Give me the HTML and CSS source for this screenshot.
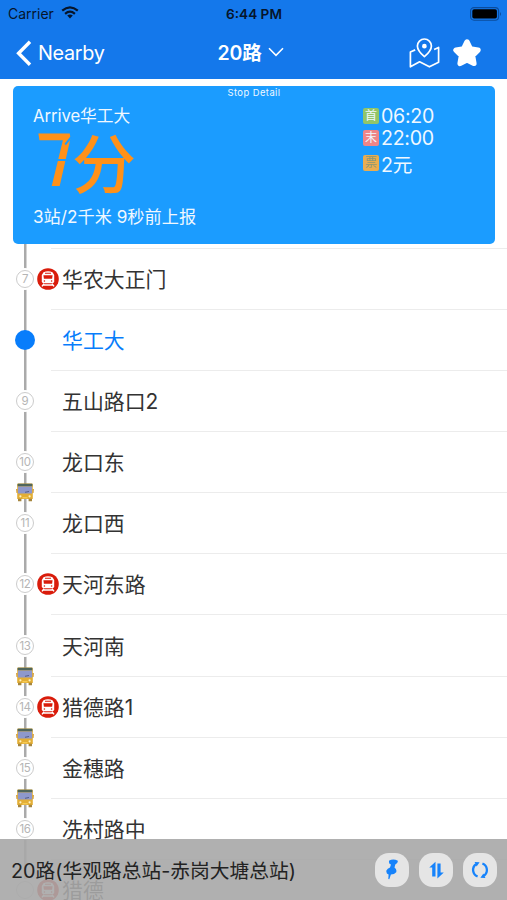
FILE: index.html
```html
<!DOCTYPE html>
<html lang="zh-CN">
<head>
<meta charset="utf-8">
<title>20路</title>
<link rel="stylesheet" href="styles.css">
</head>
<body>
<svg width="0" height="0" class="defs">
  <symbol id="metro" viewBox="0 0 22 22">
    <circle cx="11" cy="11" r="10.8" fill="#d91c0b"/>
    <path d="M6.5 4.2Q11 2.2 15.5 4.2L17.2 7V13.2Q17.2 15.2 15.2 15.2H6.8Q4.8 15.2 4.8 13.2V7Z" fill="#fff"/>
    <path d="M6.4 7.2h9.2l-.5 3.6H6.9zM8 4.8h6v1H8z" fill="#d91c0b"/>
    <circle cx="7.4" cy="13" r=".8" fill="#d91c0b"/><circle cx="14.6" cy="13" r=".8" fill="#d91c0b"/>
    <path d="M7 15.8L5 18.4M15 15.8l2 2.6M6.2 17h9.6" stroke="#fff" stroke-width="1.4"/>
  </symbol>
  <symbol id="bus" viewBox="0 0 18 19">
    <path d="M1.2 1.4Q1.4.6 2.4.6h13.2Q16.6.6 16.8 1.4V16H1.2z" fill="#e3ae35"/>
    <path d="M1.6.7h14.8v2.7H1.6z" fill="#50665b"/>
    <path d="M2 3.5h14v7H2z" fill="#8e98cc"/>
    <path d="M9 9.3l4-.8" stroke="#4e5580" stroke-width=".9"/>
    <path d="M0 6h1.8v4H.4zM16.2 6H18l-.4 4h-1.4z" fill="#d5a443"/>
    <path d="M2 15.8h3.4v2.4H2zM12.6 15.8H16v2.4h-3.4z" fill="#a6863f"/>
    <circle cx="4.4" cy="13.3" r="1.1" fill="#fff3c4"/><circle cx="13.6" cy="13.3" r="1.1" fill="#fff3c4"/>
    <path d="M6.5 14h5v1.4h-5z" fill="#f5ca55"/>
  </symbol>
</svg>
<div class="app">
  <header class="header">
    <div class="status">
      <div class="carrier"><span>Carrier</span>
        <svg width="18" height="13" viewBox="0 0 18 13"><g fill="none" stroke="#06152b" stroke-width="2.2"><path d="M1.2 4.6Q9-2 16.8 4.6"/><path d="M4.1 7.8Q9 3.5 13.9 7.8"/></g><path d="M6.2 9.6Q9 7.5 11.8 9.6L9 12.5z" fill="#06152b"/></svg>
      </div>
      <div class="clock">6:44 PM</div>
      <svg class="battery" width="32" height="14" viewBox="0 0 32 14"><rect x=".6" y=".6" width="28" height="12.6" rx="3.4" fill="none" stroke="#0b4c9c" stroke-width="1.1"/><rect x="2.3" y="2.3" width="24.6" height="9.2" rx="1.8" fill="#000"/><path d="M30 5q2 2 0 4z" fill="#0b4c9c"/></svg>
    </div>
    <nav class="nav">
      <div class="back"><svg width="16" height="27" viewBox="0 0 16 27"><path d="M14 1.8L2.6 13.3 14 24.8" fill="none" stroke="#fff" stroke-width="3.4"/></svg><span>Nearby</span></div>
      <div class="title"><span>20路</span><svg width="16" height="10" viewBox="0 0 16 10"><path d="M1 1.3l7 7 7-7" fill="none" stroke="#fff" stroke-width="1.6"/></svg></div>
      <div class="actions">
        <svg width="31" height="31" viewBox="0 0 31 31" fill="none" stroke="#fff" stroke-width="1.7" stroke-linejoin="round"><path d="M6.2 11.9L1.4 14v14.8l9.2-5 9.8 5 9.2-4.6V9.4l-4.5 2.2"/><path d="M15.4 18.6Q8.4 12.7 8.4 7.9a7 6.9 0 0 1 14 0q0 4.8-7 10.7z"/><circle cx="15.4" cy="8.2" r="1.5" fill="#fff"/></svg>
        <svg width="30" height="31" viewBox="0 0 30 31"><path d="M15 4l3.4 7 7.6 1.1-5.5 5.5 1.4 7.8L15 21.8l-6.9 3.6 1.4-7.8L4 12.1 11.6 11z" fill="#fff" stroke="#fff" stroke-width="5.4" stroke-linejoin="round"/></svg>
      </div>
    </nav>
  </header>

  <section class="card">
    <div class="card-caption">Stop Detail</div>
    <div class="card-body">
      <div class="arrival">
        <div class="arrive">Arrive华工大</div>
        <div class="eta"><span class="digit">7</span><span class="unit">分</span></div>
        <div class="distance">3站/2千米 9秒前上报</div>
      </div>
      <div class="facts">
        <div class="fact"><span class="tag first">首</span><span>06:20</span></div>
        <div class="fact"><span class="tag last">末</span><span>22:00</span></div>
        <div class="fact fare"><span class="tag price">票</span><span>2元</span></div>
      </div>
    </div>
  </section>

  <main class="stops">
    <div class="stop"><div class="track"><span class="dot">7</span></div><div class="mark"><svg class="metro"><use href="#metro"/></svg></div><div class="name">华农大正门</div></div>
    <div class="stop current"><div class="track"><span class="dot"></span></div><div class="mark"></div><div class="name">华工大</div></div>
    <div class="stop"><div class="track"><span class="dot">9</span></div><div class="mark"></div><div class="name">五山路口2</div></div>
    <div class="stop"><div class="track"><span class="dot">10</span><svg class="bus"><use href="#bus"/></svg></div><div class="mark"></div><div class="name">龙口东</div></div>
    <div class="stop"><div class="track"><span class="dot">11</span></div><div class="mark"></div><div class="name">龙口西</div></div>
    <div class="stop"><div class="track"><span class="dot">12</span></div><div class="mark"><svg class="metro"><use href="#metro"/></svg></div><div class="name">天河东路</div></div>
    <div class="stop"><div class="track"><span class="dot">13</span><svg class="bus"><use href="#bus"/></svg></div><div class="mark"></div><div class="name">天河南</div></div>
    <div class="stop"><div class="track"><span class="dot">14</span><svg class="bus"><use href="#bus"/></svg></div><div class="mark"><svg class="metro"><use href="#metro"/></svg></div><div class="name">猎德路1</div></div>
    <div class="stop"><div class="track"><span class="dot">15</span><svg class="bus"><use href="#bus"/></svg></div><div class="mark"></div><div class="name">金穗路</div></div>
    <div class="stop"><div class="track"><span class="dot">16</span></div><div class="mark"></div><div class="name">冼村路中</div></div>
    <div class="stop"><div class="track"><span class="dot"></span></div><div class="mark"><svg class="metro"><use href="#metro"/></svg></div><div class="name">猎德</div></div>
  </main>

  <footer class="footer">
    <div class="route">20路(华观路总站-赤岗大塘总站)</div>
    <div class="tools">
      <button class="tool" aria-label="Pin"><svg width="14" height="21" viewBox="0 0 14 21" fill="#1683fb"><path d="M4.2 1.4Q8.5-.6 12.8 1.7q.4 2.5-2.5 3.9l-.8 3q2.6 1.6 1.7 4.7-1.8 2.3-5.3 2.3l-1.6 4.6-1-.2.3-4.5Q.9 14.6 1.4 11.6q1-2 3.6-3l1-3Q3.2 4.6 4.2 1.4z"/></svg></button>
      <button class="tool" aria-label="Reverse"><svg width="15" height="18" viewBox="0 0 15 18" fill="#1683fb"><path d="M3.2 15.4V6.4H.3L6.5.8v14.6zM8.4 2.5h3.2v9.1h3.2L8.4 17.4z"/></svg></button>
      <button class="tool" aria-label="Refresh"><svg width="18" height="18" viewBox="0 0 18 18"><path d="M6.6 15.5A7 7 0 0 1 5 3.3M11.4 2.5A7 7 0 0 1 13 14.7" fill="none" stroke="#1683fb" stroke-width="2.3"/><path d="M3.6.9l5 .4-3 4.2zM14.4 17.1l-5-.4 3-4.2z" fill="#1683fb"/></svg></button>
    </div>
  </footer>
</div>
</body>
</html>
```

FILE: styles.css
```css
* { box-sizing: border-box; }
body { margin: 0; font-family: Inter, "Noto Sans CJK SC", sans-serif; }
.defs { position: absolute; }
.app { position: relative; width: 507px; height: 900px; overflow: hidden; background: #fff; display: flex; flex-direction: column; }

.header { flex: none; height: 79px; background: #1478eb; color: #fff; }
.status { height: 27px; padding: 0 7px 0 8px; display: grid; grid-template-columns: 1fr auto 1fr; align-items: center; color: #06152b; }
.carrier { display: flex; align-items: center; gap: 7px; font-size: 14px; line-height: 27px; }
.carrier svg { margin-top: -2px; }
.clock { font-size: 13.6px; font-weight: 600; }
.battery { justify-self: end; margin-right: -2px; }
.nav { height: 52px; padding: 0 25px 0 16px; display: grid; grid-template-columns: 1fr auto 1fr; align-items: center; }
.back { display: flex; align-items: center; gap: 6px; font-size: 19.8px; letter-spacing: -.3px; }
.title { display: flex; align-items: center; gap: 7px; margin: -3px -2px 0 2px; font-size: 19.5px; font-weight: 600; letter-spacing: -.2px; }
.actions { display: flex; justify-content: flex-end; gap: 12px; }

.card { flex: none; position: relative; z-index: 1; width: 482px; height: 158px; margin: 6.5px 0 0 13px; border-radius: 5px; background: #1b9cff; color: #f0f8ff; }
.card-caption { height: 16px; line-height: 14px; text-align: center; font-size: 9.4px; letter-spacing: .45px; }
.card-body { display: flex; padding: 0 0 0 20px; }
.arrival { width: 330px; }
.arrive { height: 28px; line-height: 28px; font-size: 16.7px; letter-spacing: -.05px; }
.eta { display: flex; height: 74px; color: #ff9119; }
.digit { position: relative; width: 39px; font: 500 74px/57px Roboto, sans-serif; transform: translate(6px, 2px) scaleX(.86) skewX(10deg); }
.digit::before, .digit::after { content: ""; position: absolute; height: 1.5px; background: #1b9cff; }
.digit::before { width: 11px; left: 30px; top: 8px; transform: rotate(-42deg); }
.digit::after { width: 14px; left: 18px; top: 27px; }
.unit { font: 500 64px/60px "Noto Sans CJK SC", sans-serif; }
.distance { height: 26px; line-height: 26px; font-size: 17.2px; }
.facts { padding-top: 3px; }
.fact { display: flex; align-items: center; gap: 2px; height: 22.4px; font-size: 19.6px; letter-spacing: -.3px; }
.fare { margin-top: 3px; }
.tag { width: 16px; height: 16px; border-radius: 2px; font-size: 12px; line-height: 16px; text-align: center; letter-spacing: 0; }
.first { background: #91c568; }
.last { background: #ee8588; }
.price { background: #e9ad50; color: #8d9877; }

.stops { flex: none; padding-top: 5.4px; margin-top: -1px; }
.stop { display: grid; grid-template-columns: 37px 25px 1fr; height: 61.1px; align-items: center; color: #333; background: linear-gradient(#ececec, #ececec) 51px 0 / 100% 1px no-repeat; }
.track { position: relative; align-self: stretch; display: flex; align-items: center; padding: 1px 0 0 16px; background: linear-gradient(#aaa, #aaa) 24px 0 / 2.5px 100% no-repeat; }
.stop:first-child .track { margin-top: -6px; padding-top: 7px; }
.dot { flex: none; position: relative; width: 18px; height: 18px; border: 1px solid #ccc; border-radius: 50%; background: #fff; box-shadow: 0 0 0 2px #fff; color: #b5b5b5; font-size: 11.5px; line-height: 16px; text-align: center; letter-spacing: -.3px; }
.bus { position: absolute; z-index: 1; left: 16px; bottom: -10px; width: 18px; height: 19px; }
.metro { display: block; width: 22px; height: 22px; margin-top: 1px; }
.name { padding-top: 3px; font-size: 20.9px; line-height: 30px; }
.current { color: #087dfb; }
.current .dot { width: 20px; height: 20px; margin-left: -1px; background: #087dfb; border: 0; box-shadow: none; }

.footer { position: absolute; z-index: 2; left: 0; right: 0; bottom: 0; height: 61px; padding: 0 10px 0 11px; display: flex; align-items: center; justify-content: space-between; background: rgba(167, 167, 167, .9); color: #222; }
.route { font-size: 19.75px; }
.tools { display: flex; gap: 10px; }
.tool { width: 34px; height: 34px; padding: 0; border: 0; border-radius: 14px; background: #e5e5e5; display: flex; align-items: center; justify-content: center; }
```
